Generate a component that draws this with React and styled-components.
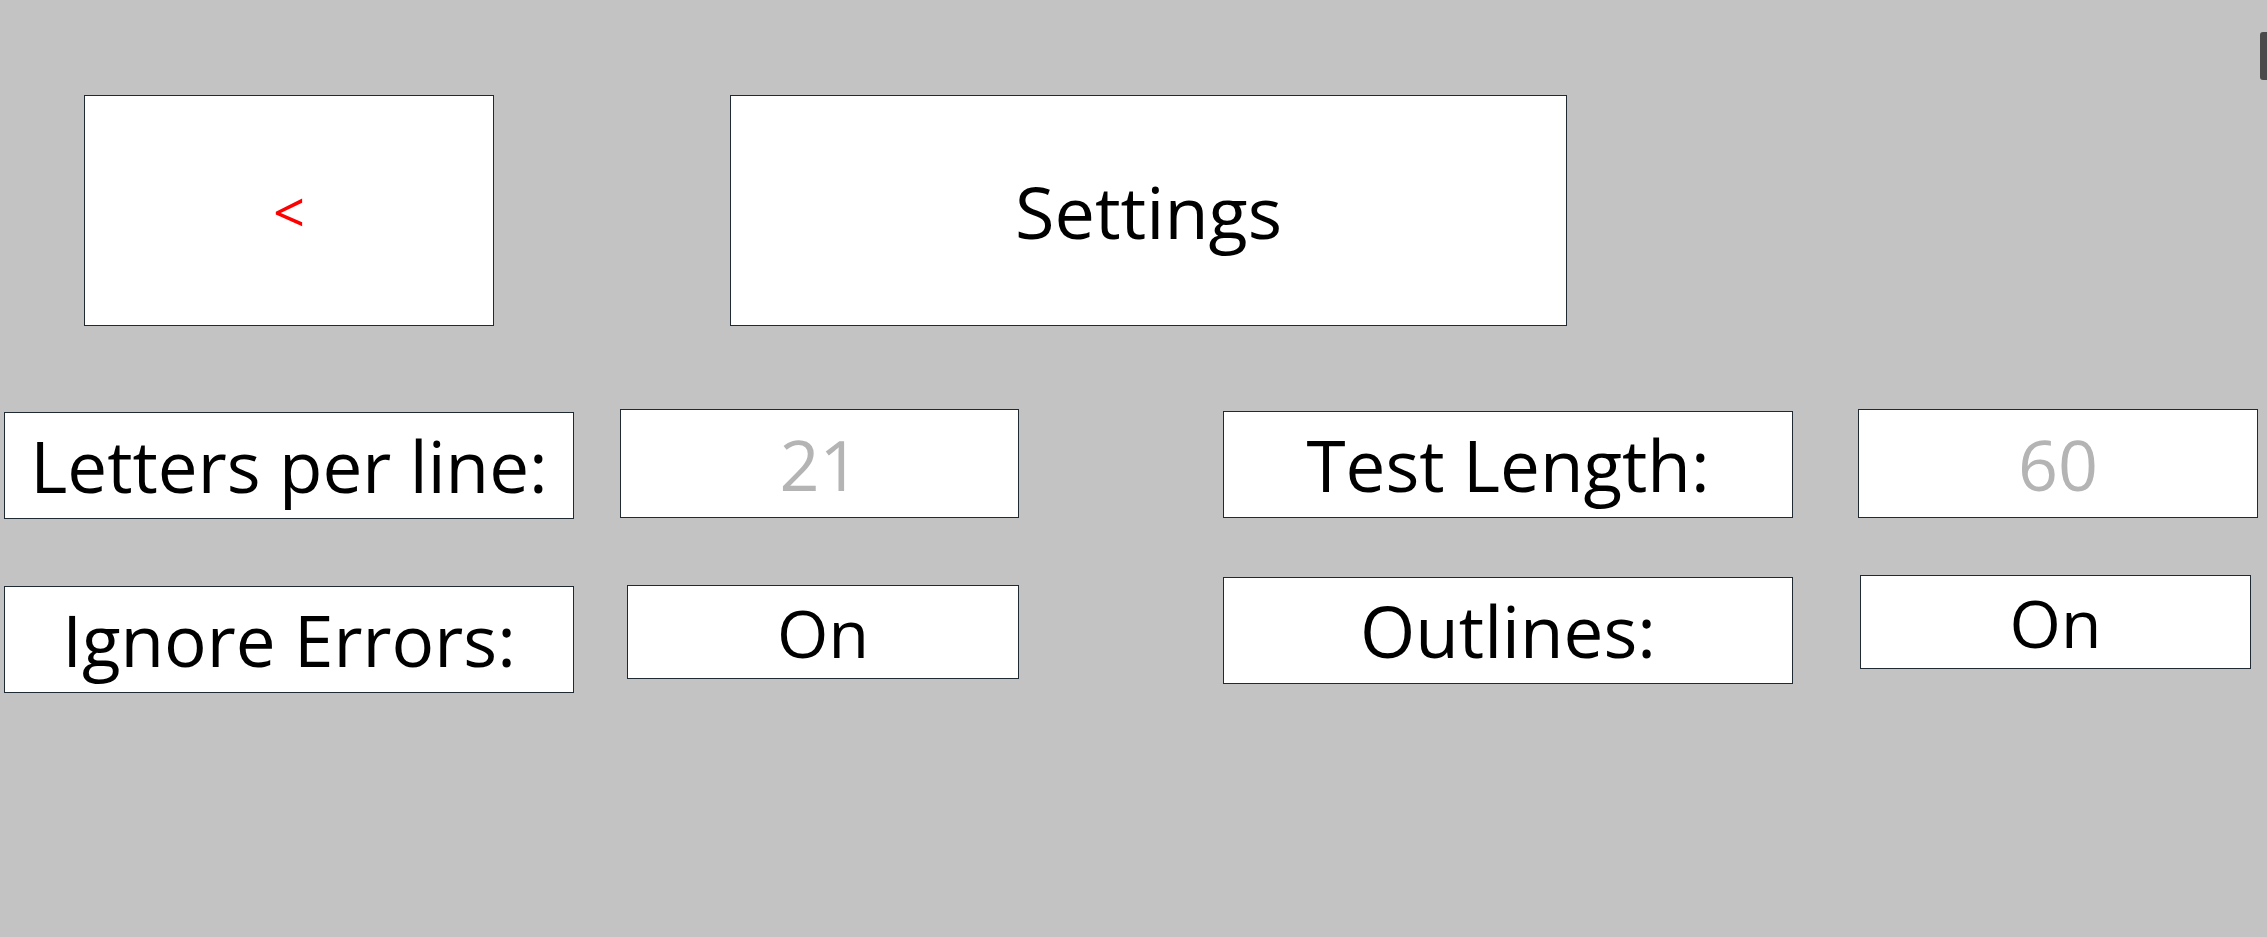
import React, { useState } from 'react'
import styled, { createGlobalStyle } from 'styled-components'

const GlobalStyle = createGlobalStyle`
* {
    box-sizing: border-box;
}
html, body {
    margin: 0;
    padding: 0;
    background: #c3c3c3;
    font-family: 'Open Sans', 'Noto Sans', sans-serif;
}
`

const Page = styled.div`
position: relative;
width: 2267px;
height: 937px;
overflow: hidden;
background: #c3c3c3;
`

const ScrollThumb = styled.div`
position: absolute;
top: 32px;
right: 0;
width: 7px;
height: 48px;
background: #4a4a4a;
border-radius: 3px 0 0 3px;
`

const Header = styled.div`
display: flex;
align-items: flex-start;
gap: 236px;
padding: 95px 0 0 84px;
`

const Box = styled.div`
display: flex;
align-items: center;
justify-content: center;
background: #ffffff;
border: 1px solid #1f2a33;
color: #000000;
line-height: 1;
white-space: nowrap;
`

const BackButton = styled(Box).attrs({ as: 'button' })`
width: 410px;
height: 231px;
padding: 0;
color: #ff0000;
font-family: 'Open Sans', sans-serif;
font-size: 56px;
cursor: pointer;
`

const Title = styled(Box)`
width: 837px;
height: 231px;
font-size: 72px;
`

const Grid = styled.div`
display: flex;
flex-direction: column;
gap: 56px;
padding: 83px 0 0 4px;
`

const Row = styled.div`
display: flex;
align-items: flex-start;
gap: 204px;
`

const Pair = styled.div`
display: flex;
align-items: flex-start;
gap: ${props => props.$gap}px;
`

const Label = styled(Box)`
width: 570px;
height: 107px;
margin-top: ${props => props.$offset || 0}px;
font-size: 71px;
`

const ValueInput = styled.input`
width: ${props => props.$width || 399}px;
height: 109px;
margin-top: ${props => props.$offset || 0}px;
background: #ffffff;
border: 1px solid #1f2a33;
border-radius: 0;
outline: none;
padding: 0;
text-align: center;
font-family: 'Open Sans', sans-serif;
font-size: 70px;
color: #000000;
&::placeholder {
    color: #b4b4b4;
}
`

const Toggle = styled(Box).attrs({ as: 'button' })`
width: ${props => props.$width}px;
height: 94px;
margin-top: ${props => props.$offset || 0}px;
padding: 0;
font-family: 'Open Sans', sans-serif;
font-size: 66px;
cursor: pointer;
`

const App = () => {
    const [letters, setLetters] = useState('')
    const [length, setLength] = useState('')
    const [ignoreErrors, setIgnoreErrors] = useState(true)
    const [outlines, setOutlines] = useState(true)

    return (
        <Page>
            <GlobalStyle />
            <ScrollThumb />
            <Header>
                <BackButton>&lt;</BackButton>
                <Title>Settings</Title>
            </Header>
            <Grid>
                <Row>
                    <Pair $gap={46}>
                        <Label $offset={3}>Letters per line:</Label>
                        <ValueInput value={letters} onChange={e => setLetters(e.target.value)} placeholder='21' />
                    </Pair>
                    <Pair $gap={65}>
                        <Label $offset={2}>Test Length:</Label>
                        <ValueInput $width={400} value={length} onChange={e => setLength(e.target.value)} placeholder='60' />
                    </Pair>
                </Row>
                <Row>
                    <Pair $gap={53}>
                        <Label $offset={11}>Ignore Errors:</Label>
                        <Toggle $width={392} $offset={10} onClick={() => setIgnoreErrors(!ignoreErrors)}>
                            {ignoreErrors ? 'On' : 'Off'}
                        </Toggle>
                    </Pair>
                    <Pair $gap={67}>
                        <Label $offset={2}>Outlines:</Label>
                        <Toggle $width={391} onClick={() => setOutlines(!outlines)}>
                            {outlines ? 'On' : 'Off'}
                        </Toggle>
                    </Pair>
                </Row>
            </Grid>
        </Page>
    )
}

export default App
